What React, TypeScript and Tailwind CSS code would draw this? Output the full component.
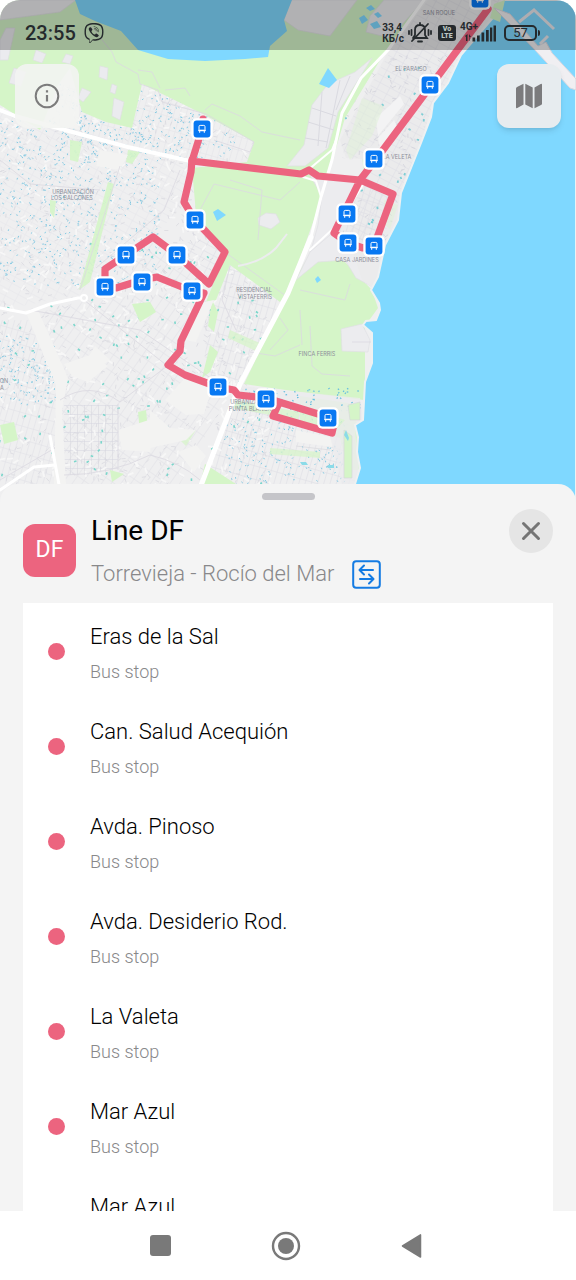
import React from "react";
import { FaViber } from "react-icons/fa";

const STOPS = [
  "Eras de la Sal",
  "Can. Salud Acequión",
  "Avda. Pinoso",
  "Avda. Desiderio Rod.",
  "La Valeta",
  "Mar Azul",
  "Mar Azul",
];

const PINS: [number, number][] = [
  [480, -1], [430, 85], [374, 159], [347, 214], [348, 243], [374, 246],
  [202, 129], [195, 220], [177, 255], [126, 255], [105, 287], [142, 282],
  [192, 291], [218, 387], [266, 399], [328, 418],
];

function random(seed: number) {
  let s = seed;
  return () => {
    s = (s * 16807) % 2147483647;
    return s / 2147483647;
  };
}

/* Short strokes spread over a box: pools and small buildings. */
function scatter(seed: number, x: number, y: number, w: number, h: number, n: number, len = 1.6) {
  const r = random(seed);
  let d = "";
  for (let i = 0; i < n; i++) {
    const px = x + r() * w;
    const py = y + r() * h;
    const a = r() * Math.PI;
    d += `M${px.toFixed(1)} ${py.toFixed(1)}l${(Math.cos(a) * len).toFixed(1)} ${(Math.sin(a) * len).toFixed(1)}`;
  }
  return d;
}

const DENSE = scatter(11, 0, 120, 160, 165, 620);
const NORTH = scatter(23, 60, 82, 175, 75, 300);
const WEST = scatter(31, 0, 335, 56, 70, 130);
const SOUTH = scatter(47, 225, 408, 125, 78, 230);
const TEAL = scatter(59, 0, 300, 270, 184, 90, 2.6);
const MID = scatter(61, 90, 240, 170, 150, 50, 2.4);
const GREY = scatter(71, 0, 60, 270, 424, 1100, 4);
const PALE = scatter(83, 0, 60, 270, 424, 600, 6);
const EAST = scatter(97, 330, 50, 120, 240, 260, 4);
const EASTBLUE = scatter(101, 345, 60, 80, 200, 36, 2.4);
const CLUSTER = scatter(113, 240, 388, 120, 20, 60);

function Pin({ x, y }: { x: number; y: number }) {
  return (
    <g transform={`translate(${x} ${y})`}>
      <rect x="-10.7" y="-10.7" width="21.4" height="21.4" rx="5" fill="#fff" />
      <rect x="-8.4" y="-8.4" width="16.8" height="16.8" rx="3" fill="#0878f2" />
      <path d="M-3 2.2V-2.4Q-3-3.6-1.8-3.6H1.8Q3-3.6 3-2.4V2.2M-3.6 1.4H3.6M-2.3 1.5V3.8M2.3 1.5V3.8" fill="none" stroke="#fff" strokeWidth="1" />
      <path d="M-2.4 .8H2.4V2.2H-2.4Z" fill="#fff" />
    </g>
  );
}

function CityMap() {
  return (
    <svg className="absolute inset-0 h-full w-full" viewBox="0 0 576 508" preserveAspectRatio="xMidYMin slice" role="img" aria-label="Route map">
      <defs>
        <pattern id="ha" width="7" height="11" patternUnits="userSpaceOnUse" patternTransform="rotate(-62)">
          <path d="M0 0H7M0 0V11" stroke="#dedee5" strokeWidth="1.1" fill="none" />
        </pattern>
        <pattern id="hb" width="8" height="15" patternUnits="userSpaceOnUse" patternTransform="rotate(35)">
          <path d="M0 0H8M0 0V15" stroke="#dfdfe5" strokeWidth="1" fill="none" />
        </pattern>
        <pattern id="hc" width="7" height="9" patternUnits="userSpaceOnUse">
          <path d="M0 0H7M0 0V9" stroke="#d6d6df" strokeWidth="1.1" fill="none" />
        </pattern>
        <pattern id="hd" width="6" height="13" patternUnits="userSpaceOnUse" patternTransform="rotate(16)">
          <path d="M0 0H6M0 0V13" stroke="#dcdce3" strokeWidth="1.1" fill="none" />
        </pattern>
        <clipPath id="strip">
          <path d="M428 0H505L461 55L433 103L401 193L385 245L345 245L334 232L372 160L335 150L345 118L385 52Z" />
        </clipPath>
      </defs>
      <rect width="576" height="508" fill="#efeff0" />

      {/* Street grids */}
      <path d="M0 110L190 162L184 205L150 240L100 270L80 295L0 310Z" fill="url(#ha)" opacity=".5" />
      <path d="M50 85H250V160L190 162L60 128Z" fill="url(#hd)" opacity=".6" />
      <path d="M85 300L205 290L175 370L230 390L180 484H60V380L30 315Z" fill="url(#hb)" />
      <path d="M0 320L30 320L58 380V484H0Z" fill="url(#hd)" opacity=".8" />
      <path d="M64 405H118V475H64Z" fill="url(#hc)" />
      <path d="M230 400L355 425V484H205Z" fill="url(#hd)" />
      <path d="M206 300L228 262L282 300L240 386L205 380Z" fill="url(#hd)" />
      <path d="M105 268L153 237L210 284L192 291L142 280Z" fill="url(#hb)" />
      <path d="M205 235L226 251L210 284L170 250Z" fill="url(#ha)" />
      <path d={GREY} stroke="#d9d9df" strokeWidth=".8" />
      <path d={PALE} stroke="#f7f7f7" strokeWidth="1.8" />
      <path d={DENSE + NORTH + WEST + SOUTH} stroke="#83c9e2" strokeWidth="1" />
      <path d={TEAL + MID} stroke="#7ad6cb" strokeWidth="1.6" />

      {/* Parks and open land */}
      <g fill="#d5f5c8">
        <path d="M0 0H425L385 52L345 118L325 185L321 200L288 292L280 302L256 284L230 265L216 300L206 302L226 252L196 214L192 168L247 162L254 142L205 115L142 84L132 128L106 122L82 112L70 68L58 85L40 130L0 105Z" />
        <path d="M288 292L312 250L345 262L372 290L378 308L365 326V382L364 400L300 392L244 384Z" />
        <path d="M70 140L82 142L78 162L70 160ZM108 182L114 184L90 282L79 290ZM50 200L56 201L54 218L50 212ZM128 150L140 152L132 164L126 162Z" opacity=".9" />
        <path d="M132 304L150 302L156 312L140 322ZM212 300L218 312L214 332L208 326ZM210 345L218 352L210 372L202 378ZM205 464L236 484H200ZM138 412L146 410L148 430L140 432ZM0 425L14 422L18 440L4 444ZM110 470L124 474L112 482Z" />
        <path d="M360 140L382 126L366 190ZM385 200L399 204L384 245L379 240ZM300 396L355 404L360 470L348 470L340 438L300 424Z" opacity=".7" />
        <path d="M235 400L300 412L298 420L232 408ZM178 438L196 430L186 446ZM270 448L320 452V458L270 454ZM230 330L262 344L258 352L228 338Z" opacity=".7" />
      </g>
      <g fill="#ececef" stroke="#dfdfe4" strokeWidth=".7">
        <path d="M100 66l8 2-1 12-8-3ZM66 54l7 2-3 8-8-2ZM82 88l9 4-8 10-5-4ZM114 98l10 4-4 18-8-4ZM112 84l5 2-2 8-5-2ZM14 68l12 4-5 14-12-3ZM36 50l10 4-4 9-9-3Z" />
        <path d="M258 218l8-5 10 1 4 8-9 7-12-4Z" />
        <path d="M372 58L355 72L328 84L312 105L304 145L287 166L305 166L328 148L338 112Z" />
        <path d="M308 172L328 178L360 180L340 218L332 236L310 254L318 225L322 196Z" />
        <path d="M341 329L362 324L370 340L368 352L342 351Z" />
        <path d="M310 252L336 230L345 246L372 252L371 286L356 278L345 260L318 262L296 280Z" />
        <path d="M0 0H76L60 12L0 20ZM6 28H15L8 60H0V40Z" />
        <path d="M291 0H357L330 36L298 30L284 20Z" />
        <path d="M370 16L384 0H424L390 38L366 32Z" />
      </g>
      <path d="M312 108L336 116M308 122L334 130M305 138L328 142M322 92L318 146M340 80L326 148M350 76L336 110" fill="none" stroke="#dadae1" />
      <g fill="#f3f3f2">
        <path d="M25 310H38L68 378L62 410L66 484H54L56 385ZM64 364L90 355L108 366L88 382L72 376ZM88 358L95 346L110 360L98 368ZM165 400L185 378L212 388L204 414L186 415ZM178 452L196 445L206 456L194 472ZM118 430L155 418L150 452L122 450ZM296 430L335 438L332 447L296 442ZM150 410L170 428L196 430L186 440L150 448Z" />
        <path d="M60 108L70 110L80 130L60 126ZM100 150L128 155L120 170L96 166ZM204 302L214 300L196 342L184 340Z" />
      </g>

      {/* Eastern built-up strip */}
      <path d="M428 0H505L461 55L448 83L433 103L421 143L401 193L398 220L385 245L376 290L362 280L352 250L334 232L358 182L372 160L346 158L340 140L352 118L388 52Z" fill="#ebebec" />
      <path d="M428 0H500L461 55L448 83L433 103L421 143L401 193L390 220L380 245L345 238L365 180L390 130L355 160L342 158L352 118L390 52Z" fill="url(#ha)" />
      <path d="M365 182L392 194L370 245L338 232Z" fill="url(#hd)" />
      <g clipPath="url(#strip)">
        <path d={EAST} stroke="#d5d5dc" strokeWidth=".9" />
        <path d={EASTBLUE} stroke="#7ecdd4" strokeWidth="1.8" />
      </g>
      <path d="M376 118L400 96L404 104L378 136ZM378 138L394 120L398 128L380 148Z" fill="#f3f3f4" />
      <path d="M362 98L384 106L372 136L350 160L346 150ZM384 200l14 5-8 24-5-4Z" fill="#ddf2d4" opacity=".45" />
      <path d="M240 386L360 398L364 424L355 430L360 484H342L330 436L345 420L280 400L240 398Z" fill="#ebebed" opacity=".75" />
      <path d={CLUSTER} stroke="#68bfdf" strokeWidth="1.2" />
      <path d="M348 405L360 402V420H350ZM344 430L352 436V478H344ZM296 446L330 450" fill="#d5f5c8" stroke="#d8d8dd" strokeWidth=".7" />

      {/* Minor paths */}
      <g fill="none" stroke="#dcdae2" strokeWidth="1" opacity=".8">
        <path d="M90 25L112 52L116 62L138 74L140 84L158 90L162 102L206 114L254 142L250 152L214 140" />
        <path d="M138 70L152 72L160 88M165 90L185 88L190 96M205 110L212 104L240 116L262 132L300 140" />
        <path d="M270 350L288 330L280 318M310 326L312 366L322 374L350 376M352 342H372M300 310L302 345" />
        <path d="M230 180L262 190L258 240M222 250L286 296M300 290L345 300L350 284M120 166L80 290M200 210L214 184L280 200L300 182" />
        <path d="M60 400Q90 380 120 402L175 360M64 475Q110 475 150 455Q180 462 200 480M118 404V470M30 310L140 330L240 398M0 480L55 448M84 300L170 368" />
        <path d="M250 352L275 356L300 345M0 160L30 184L100 190M180 170L164 210L96 268M230 266L222 300L236 330" />
      </g>
      <path d="M238 266Q262 262 276 248L287 234" fill="none" stroke="#ececef" strokeWidth="2" />

      {/* Main roads */}
      <g fill="none" stroke="#fff" strokeWidth="3" strokeLinejoin="round" strokeLinecap="round">
        <path d="M424 0L388 50L361 78L342 113L332 160L321 197L311 237L288 293L240 384L200 488" />
        <path d="M311 237L288 293L240 384L200 488" strokeWidth="5" />
        <path d="M0 110L15 116L65 130L128 147L190 161" strokeWidth="4" />
        <path d="M0 308L26 313L50 304L78 298H84" />
        <path d="M0 490L34 467L55 465M50 436L60 490" />
        <path d="M300 176L316 181L321 197M310 250L336 226L365 182M336 140L332 150L308 170" strokeWidth="2" />
      </g>
      <circle cx="84" cy="298" r="3" fill="#efeff0" stroke="#fff" strokeWidth="2" />

      {/* Water */}
      <g fill="#7fd8ff">
        <path d="M75 0L80 14L95 21L121 31L138 50L168 59L205 61L245 59L268 57L270 46L287 31L284 20L292 0Z" />
        <path d="M502 0H576V508H353L355 484L360 468L357 452L358 437L355 425L363 420L365 382L372 363L372 333L363 325L366 321L376 320L380 310L379 303L371 290L378 277L385 245L398 220L401 193L421 143L431 117L433 103L448 83L461 55L498 12Z" stroke="#eef1f2" strokeWidth="2" />
        <path d="M359 18l5-3 4 5-6 4ZM370 24l7-3 4 6-7 2ZM366 8l5-3 4 4-5 2ZM374 14l4-2 4 4-4 2Z" />
        <path d="M213 212L218 209L226 215L217 221ZM328 68L337 80L329 88L319 84ZM315 279l3-3 3 4-4 3Z" />
      </g>
      <path d="M346 430l3 8-1 3-4-6ZM300 462h6l2 3h-6ZM328 465h6v3h-6Z" fill="#8bdbe8" />
      <path d="M494 4L505 0L500 22L490 18Z" fill="#d5f5c8" />
      <path d="M494 8L508 22L535 50L570 88L576 90V79L552 53L546 42L538 46L510 14Z" fill="#f0eff2" stroke="#d9d7df" strokeWidth="1" />
      <path d="M519 22L534 10L554 29M540 44L548 36" fill="none" stroke="#e9e7ec" strokeWidth="3" />

      {/* District names */}
      <g fill="#8c8e99" fontFamily="Inter, sans-serif" fontSize="5.5" textAnchor="middle">
        <text x="439" y="15">SAN ROQUE</text>
        <text x="411" y="71">EL PARAISO</text>
        <text x="397" y="159">LA VELETA</text>
        <text x="73" y="194">URBANIZACIÓN</text>
        <text x="72" y="200">LOS BALCONES</text>
        <text x="357" y="262">CASA JARDINES</text>
        <text x="254" y="292">RESIDENCIAL</text>
        <text x="255" y="299">VISTAFERRIS</text>
        <text x="317" y="356">FINCA FERRIS</text>
        <text x="251" y="404">URBANIZACIÓN</text>
        <text x="250" y="411">PUNTA BLANCA</text>
        <text x="4" y="383">ON</text>
        <text x="2" y="390">A</text>
      </g>

      <g fill="none" stroke="#ec647f" strokeWidth="7.2" strokeLinejoin="round" strokeLinecap="round">
        <path d="M488 9L374 162L360 180L334 233L348 243L363 248L374 246L393 194L360 180L318 176L309 170L301 174L192 161L202 129L203 119" />
        <path d="M192 160L191 172L184 202L195 220L225 252L209 284L177 255L153 237L105 269V287L116 288L142 280L157 277L192 291L204 293L181 341L180 351L168 365L185 375L218 387L234 390L238 395L266 398L328 417L334 424L332 433L273 416L279 403" />
      </g>
      {PINS.map(([x, y]) => (
        <Pin key={`${x}-${y}`} x={x} y={y} />
      ))}
    </svg>
  );
}

function StatusBar() {
  return (
    <div className="relative flex h-[50px] items-center justify-between bg-black/25 pt-4 pr-9 pl-[25px] text-[#252a2d]">
      <div className="flex items-center gap-2">
        <span className="text-[20px] leading-6 font-medium">23:55</span>
        <FaViber className="size-5" />
      </div>
      <div className="flex items-center">
        <div className="flex flex-col text-[10px] leading-[11px] font-bold">
          <span>33,4</span>
          <span>КБ/с</span>
        </div>
        <svg className="ml-1 h-6 w-6" viewBox="0 0 24 24" fill="none" stroke="currentColor" strokeWidth="1.800" strokeLinecap="round" aria-hidden="true">
          <path d="M6 17H19L17 14V9Q17 4 12 4Q7 4 7 9V14L5 17M10 20.500H14M12 2V4M4 20L20 3M3.500 9V14M1 10V13M20.500 9V14M23 10V13" />
        </svg>
        <div className="ml-[6px] flex h-4 w-[18px] flex-col items-center justify-center rounded-[3px] bg-[#252a2d] text-[7px] leading-[7px] font-black text-[#bcc7c4]">
          <span>Vo</span>
          <span>LTE</span>
        </div>
        <div className="relative ml-1 h-5 w-9">
          <span className="absolute -top-[2px] left-0 text-[10px] leading-3 font-bold">4G+</span>
          <svg className="h-full w-full" viewBox="0 0 36 20" fill="currentColor" aria-hidden="true">
            <path d="M5 13L7.500 11V18H6V14ZM9 18V11L11 14H9.500V18ZM12.500 14.500h2.700v4h-2.700ZM17 12.500h2.700v6H17ZM21.500 9.500h2.700v9h-2.700ZM26 7h2.700v11.500H26ZM30 4.500h2.300v14H30ZM33.500 2.500H36v16h-2.500Z" />
          </svg>
        </div>
        <div className="ml-2 flex h-4 w-[33px] items-center justify-center rounded-[5px] border-2 border-[#252a2d] text-[13px] leading-3">57</div>
        <div className="ml-px h-[6px] w-[2px] rounded-r bg-[#252a2d]" />
      </div>
    </div>
  );
}

export default function App() {
  return (
    <div className="flex h-screen flex-col overflow-hidden bg-white font-[Roboto,'Noto_Sans',sans-serif]">
      <header className="relative h-[508px] shrink-0 overflow-hidden rounded-t-[20px]">
        <CityMap />
        <StatusBar />
        <div className="relative flex justify-between px-[15px] pt-[14px]">
          <button aria-label="Information" className="flex size-16 items-center justify-center rounded-xl bg-[#f3f4f2]/90 text-[#7c7c7c]">
            <svg className="size-[26px]" viewBox="0 0 26 26" fill="none" stroke="currentColor" strokeWidth="2" aria-hidden="true">
              <circle cx="13" cy="13" r="11.300" />
              <path d="M13 12V18.500M13 7.200V9.400" strokeWidth="2.200" />
            </svg>
          </button>
          <button aria-label="Map type" className="flex size-16 items-center justify-center rounded-xl bg-[#e7ecef] text-[#7b7b7d] shadow-md">
            <svg className="h-[26px] w-7" viewBox="0 0 28 26" fill="currentColor" aria-hidden="true">
              <path d="M1 5.500Q1 4.500 2 4L8.500 .8V21.500L2.300 25Q1 25.600 1 24.200ZM10.300 .8L17.700 4.500V25.200L10.300 21.500ZM19.500 4.500L25.700 1Q27 .4 27 1.800V20.500Q27 21.500 26 22L19.500 25.200Z" />
            </svg>
          </button>
        </div>
      </header>

      <main className="relative -mt-6 flex min-h-0 flex-1 flex-col rounded-t-[18px] bg-[#f4f4f4] px-[23px] pt-[9px]">
        <div className="mx-auto h-[7px] w-[53px] shrink-0 rounded-full bg-[#c5c5c9]" />
        <div className="flex shrink-0 items-start pt-[9px] pb-[10px]">
          <div className="mt-[15px] flex size-[53px] shrink-0 items-center justify-center rounded-xl bg-[#ec647f] text-[23px] text-white">DF</div>
          <div className="ml-[15px] min-w-0 flex-1 pt-1">
            <h1 className="text-[28px] leading-9 text-black">Line DF</h1>
            <div className="mt-[6px] flex h-[38px] items-center gap-[18px]">
              <p className="text-[22px] leading-8 font-light whitespace-nowrap text-[#88888a]">Torrevieja - Rocío del Mar</p>
              <button aria-label="Reverse direction" className="text-[#147be3]">
                <svg className="size-[29px]" viewBox="0 0 29 29" fill="none" stroke="currentColor" strokeWidth="2" strokeLinecap="round" strokeLinejoin="round" aria-hidden="true">
                  <rect x="1.200" y="1.200" width="26.600" height="26.600" rx="3" />
                  <path d="M21 10H8M12 5.500L7.500 10L12 14.500M8 19H21M17 14.500L21.500 19L17 23.500" />
                </svg>
              </button>
            </div>
          </div>
          <button aria-label="Close" className="flex size-11 shrink-0 items-center justify-center rounded-full bg-[#e5e5e5] text-[#757575]">
            <svg className="size-5" viewBox="0 0 20 20" fill="none" stroke="currentColor" strokeWidth="3" strokeLinecap="round" aria-hidden="true">
              <path d="M2.500 2.500L17.500 17.500M17.500 2.500L2.500 17.500" />
            </svg>
          </button>
        </div>
        <ul className="min-h-0 flex-1 overflow-hidden bg-white pt-px">
          {STOPS.map((name, i) => (
            <li key={i} className="flex h-[95px] items-center gap-[25px] pl-[25px]">
              <span className="size-[17px] shrink-0 rounded-full bg-[#ec647f]" />
              <div className="pt-[6px]">
                <p className="text-[22px] leading-[35px] font-light text-black">{name}</p>
                <p className="text-[18px] leading-9 font-light text-[#88888a]">Bus stop</p>
              </div>
            </li>
          ))}
        </ul>
      </main>

      <nav className="flex h-[69px] shrink-0 items-center justify-center gap-[99px] bg-white pr-1 text-[#797979]">
        <button aria-label="Recent apps" className="flex size-6 items-center justify-center">
          <span className="size-[21px] rounded-[3px] bg-current" />
        </button>
        <button aria-label="Home">
          <svg className="size-[30px]" viewBox="0 0 30 30" aria-hidden="true">
            <circle cx="15" cy="15" r="13" fill="none" stroke="currentColor" strokeWidth="2.400" />
            <circle cx="15" cy="15" r="8" fill="currentColor" />
          </svg>
        </button>
        <button aria-label="Back">
          <svg className="size-6" viewBox="0 0 24 24" fill="currentColor" stroke="currentColor" strokeWidth="1.500" strokeLinejoin="round" aria-hidden="true">
            <path d="M2.500 12L20.500 .9V23.100Z" />
          </svg>
        </button>
      </nav>
    </div>
  );
}
